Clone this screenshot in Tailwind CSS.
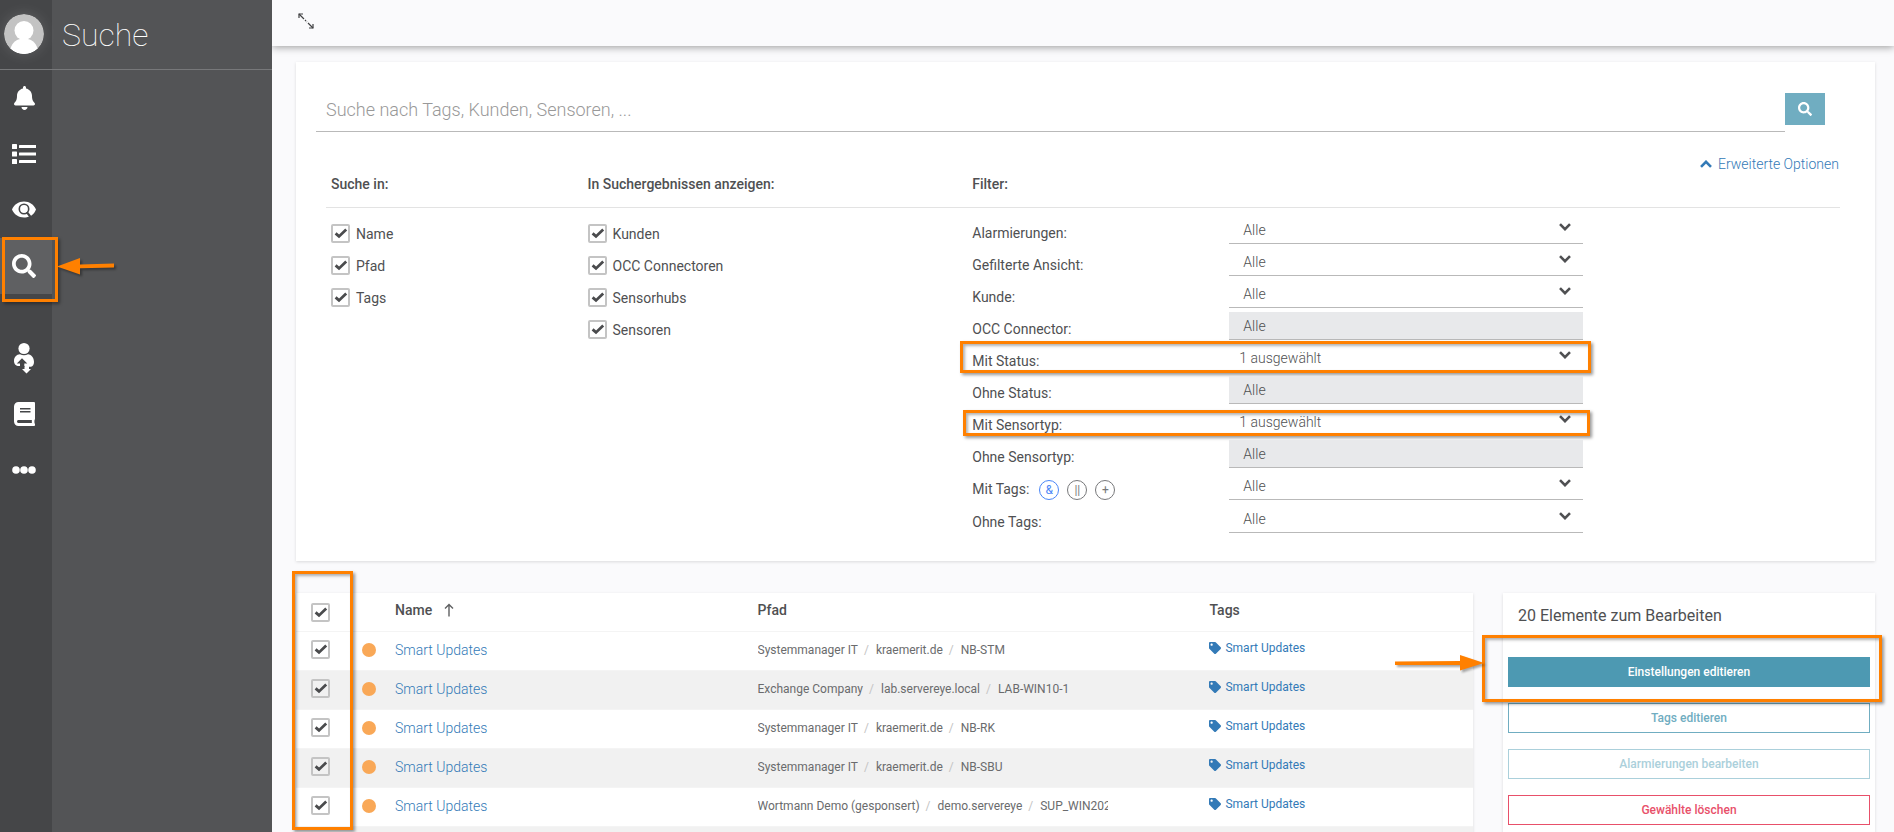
<!DOCTYPE html>
<html lang="de">
<head>
    <meta charset="UTF-8">
    <meta name="viewport" content="width=device-width, initial-scale=1.0">
    <title>Suche</title>
    <script src="https://cdn.jsdelivr.net/npm/@tailwindcss/browser@4"></script>
</head>
<body class="bg-[#fafafc] font-['Roboto','Open_Sans',sans-serif] text-sm text-[#4f5052] flex h-screen overflow-hidden">

    <!-- shared icons -->
    <svg class="hidden">
        <symbol id="i-check" viewBox="0 0 19 19"><path d="M4.600 9.400 8 12.400 15.200 5.600" fill="none" stroke="#4a4b4d" stroke-width="2.800"/></symbol>
        <symbol id="i-chevron" viewBox="0 0 12 8"><path d="M1 1.200 6 6.200 11 1.200" fill="none" stroke="currentColor" stroke-width="2.600"/></symbol>
        <symbol id="i-search" viewBox="0 0 512 512"><path fill="currentColor" d="M505 442.7L405.3 343c-4.5-4.5-10.6-7-17-7H372c27.6-35.3 44-79.7 44-128C416 93.1 322.9 0 208 0S0 93.1 0 208s93.1 208 208 208c48.3 0 92.7-16.4 128-44v16.3c0 6.4 2.5 12.5 7 17l99.7 99.7c9.4 9.4 24.6 9.4 33.9 0l28.3-28.3c9.4-9.4 9.4-24.6.1-34zM208 336c-70.7 0-128-57.2-128-128 0-70.7 57.2-128 128-128 70.7 0 128 57.2 128 128 0 70.7-57.2 128-128 128z"/></symbol>
        <symbol id="i-tag" viewBox="0 0 512 512"><path fill="currentColor" d="M0 252.1V48C0 21.5 21.5 0 48 0h204.1a48 48 0 0 1 33.9 14.1l211.9 211.9c18.7 18.7 18.7 49.1 0 67.9L293.8 497.9c-18.7 18.7-49.1 18.7-67.9 0L14.1 286.1A48 48 0 0 1 0 252.1zM112 64c-26.5 0-48 21.5-48 48s21.5 48 48 48 48-21.5 48-48-21.5-48-48-48z"/></symbol>
    </svg>

    <!-- sidebar -->
    <aside class="flex w-[272px] shrink-0 flex-col bg-[#535456] relative z-20">
        <header class="flex h-[70px] shrink-0 border-b border-[#77787a]">
            <div class="w-[52px] bg-[#454648] pl-1 pt-3.5">
                <svg class="size-10 rounded-full shadow-[0_0_14px_rgba(255,255,255,0.15)]" viewBox="0 0 40 40">
                    <circle cx="20" cy="20" r="20" fill="#c3c3c3"/>
                    <path d="M6.500 34.800C8 28.500 13 24.500 20 24.500s12 4 13.500 10.300A20 20 0 0 1 6.500 34.800z" fill="#fff"/>
                    <circle cx="20" cy="16.500" r="9.500" fill="#fff"/>
                </svg>
            </div>
            <h1 class="pl-2.5 pt-[15px] text-[32px] leading-10 font-thin text-white">Suche</h1>
        </header>
        <nav class="flex w-[52px] grow flex-col bg-[#454648] text-white
            [&>a]:flex
            [&>a]:h-14
            [&>a]:items-center
            [&>a]:justify-center
            [&>a]:pr-1
        ">
            <a href="#" aria-label="Alarmierungen">
                <svg class="h-6" viewBox="0 0 448 512" fill="currentColor"><path d="M224 512c35.320 0 63.970-28.650 63.970-64H160.030c0 35.350 28.650 64 63.970 64zm215.390-149.710c-19.320-20.760-55.470-51.990-55.470-154.290 0-77.700-54.480-139.900-127.940-155.160V32c0-17.670-14.320-32-31.980-32s-31.980 14.330-31.980 32v20.840C118.560 68.100 64.080 130.300 64.080 208c0 102.300-36.150 133.530-55.470 154.290-6 6.450-8.660 14.160-8.610 21.710.11 16.400 12.980 32 32.100 32h383.800c19.120 0 32-15.600 32.100-32 .05-7.550-2.610-15.270-8.610-21.710z"/></svg>
            </a>
            <a href="#" aria-label="Liste">
                <svg class="size-6" viewBox="0 0 24 24" fill="currentColor">
                    <rect x="0" y="2" width="5" height="5" rx=".6"/><rect x="7" y="3" width="17.500" height="3" rx=".6"/>
                    <rect x="0" y="9.500" width="5" height="5" rx=".6"/><rect x="7" y="10.500" width="17.500" height="3" rx=".6"/>
                    <rect x="0" y="17" width="5" height="5" rx=".6"/><rect x="7" y="18" width="17.500" height="3" rx=".6"/>
                </svg>
            </a>
            <a href="#" aria-label="Ansichten">
                <svg class="size-6" viewBox="0 0 24 24">
                    <path d="M12 3.500C6.500 3.500 2 6.700 0 11.500c2 4.800 6.500 8 12 8 2 0 4-.4 5.600-1.200L19.500 17.500C21.500 16 23 14 24 11.500 22 6.700 17.500 3.500 12 3.500z" fill="#fff"/>
                    <circle cx="12" cy="11" r="4.700" fill="#fff" stroke="#454648" stroke-width="1.600"/>
                    <path d="M14.800 14.100 18.200 18.500" stroke="#454648" stroke-width="2.200"/>
                </svg>
            </a>
            <a href="#" aria-label="Suche" aria-current="page" class="relative bg-[#5f6062]">
                <svg class="size-6"><use href="#i-search"/></svg>
                <span class="absolute -top-px left-0.5 h-[65px] w-14 border-3 border-[#ff8000] shadow-[2px_2px_3px_rgba(0,0,0,0.35)]"></span>
                <svg class="absolute top-4 left-14 h-7 w-16 drop-shadow-[2px_2px_1px_rgba(0,0,0,0.35)]" viewBox="0 0 64 28"><path d="M1 12.500 24 4v6.500l34-1v4l-34 .8V20.500z" fill="#ff8000"/></svg>
            </a>
            <a href="#" aria-label="Fernwartung" class="mt-9">
                <svg class="h-8 w-6" viewBox="0 0 24 32">
                    <circle cx="12" cy="6.500" r="5.600" fill="#fff"/>
                    <path d="M8 12.300c1.200.7 2.500 1 4 1s2.800-.3 4-1c3.500.2 6 3.600 6 7.700 0 2.500-1.200 4.300-3 4.800h-2V27h2l-4.500 4.500L10 27h2.500v-3H8c-3.500.5-6-1.500-6-5 0-4 2.500-6.500 6-6.700z" fill="#fff"/>
                    <path d="M10 16.200 4.800 21.500H8V25h4.300v-3.500h3z" fill="#454648"/>
                </svg>
            </a>
            <a href="#" aria-label="Handbuch">
                <svg class="h-6" viewBox="0 0 448 512" fill="currentColor"><path d="M448 360V24c0-13.300-10.700-24-24-24H96C43 0 0 43 0 96v320c0 53 43 96 96 96h328c13.300 0 24-10.700 24-24v-16c0-7.500-3.500-14.300-8.900-18.700-4.200-15.400-4.200-59.300 0-74.700 5.400-4.300 8.900-11.100 8.900-18.600zM128 134c0-3.300 2.700-6 6-6h212c3.300 0 6 2.700 6 6v20c0 3.300-2.700 6-6 6H134c-3.300 0-6-2.700-6-6v-20zm0 64c0-3.300 2.700-6 6-6h212c3.300 0 6 2.700 6 6v20c0 3.300-2.700 6-6 6H134c-3.300 0-6-2.700-6-6v-20zm253.400 250H96c-17.700 0-32-14.300-32-32 0-17.600 14.400-32 32-32h285.400c-1.900 17.100-1.900 46.900 0 64z"/></svg>
            </a>
            <a href="#" aria-label="Mehr">
                <svg class="size-6" viewBox="0 0 24 24" fill="currentColor"><circle cx="4" cy="12" r="3.800"/><circle cx="12" cy="12" r="3.800"/><circle cx="20" cy="12" r="3.800"/></svg>
            </a>
        </nav>
    </aside>

    <div class="flex min-w-0 grow flex-col">
        <!-- top bar -->
        <header class="relative z-10 flex h-[46px] shrink-0 items-center bg-[#fafafc] pb-1 pl-[26px] shadow-[0_1px_8px_rgba(0,0,0,0.4)]">
            <button type="button" aria-label="Vollbild">
                <svg class="size-4" viewBox="0 0 16 16" fill="none" stroke="#3f4042" stroke-width="1.200">
                    <path d="M1 5V1h4M15 11v4h-4"/><path d="M1 1 6 6M10 10l5 5"/><path d="M7 7l2 2" stroke-dasharray="1.500 1"/>
                </svg>
            </button>
        </header>

        <main class="flex flex-col gap-8 pt-4 pr-[19px] pl-6">
            <!-- search form -->
            <form class="bg-white px-5 pb-7 shadow-[0_1px_3px_rgba(0,0,0,0.13)]">
                <div class="flex items-start pt-[31px] pr-[30px]">
                    <input type="text" aria-label="Suche" placeholder="Suche nach Tags, Kunden, Sensoren, ..." class="h-[39px] min-w-0 grow border-b border-[#b9b9b9] px-2.5 pb-1.5 text-lg font-light placeholder:text-[#999] outline-none">
                    <button type="submit" aria-label="Suchen" class="grid h-8 w-10 place-items-center bg-[#70adc1] text-white"><svg class="size-3.5"><use href="#i-search"/></svg></button>
                </div>
                <div class="flex justify-end pt-[22px] pr-4">
                    <a href="#" class="flex items-center gap-1.5 leading-5 font-light text-[#337ab7]">
                        <svg class="h-2 w-3 rotate-180"><use href="#i-chevron"/></svg>Erweiterte Optionen
                    </a>
                </div>
                <div class="mr-[15px] ml-2.5 h-[34px] border-b border-[#e3e3e3]"></div>

                <div class="-mt-[34px] grid grid-cols-[2fr_3fr_7fr]
                    [&>section]:px-[15px]
                    [&_h2]:h-[50px]
                    [&_h2]:leading-5
                    [&_h2]:font-medium
                    [&_.tick]:grid
                    [&_.tick]:size-[19px]
                    [&_.tick>*]:col-start-1
                    [&_.tick>*]:row-start-1
                    [&_.tick>*]:size-[19px]
                    [&_.option]:flex
                    [&_.option]:h-8
                    [&_.option]:items-start
                    [&_.option]:gap-1.5
                    [&_.option]:leading-5
                ">
                    <section>
                        <h2>Suche in:</h2>
                        <label class="option"><span class="tick"><input type="checkbox" checked class="appearance-none rounded-xs border-2 border-[#c4c4c4] bg-white"><svg class="pointer-events-none"><use href="#i-check"/></svg></span>Name</label>
                        <label class="option"><span class="tick"><input type="checkbox" checked class="appearance-none rounded-xs border-2 border-[#c4c4c4] bg-white"><svg class="pointer-events-none"><use href="#i-check"/></svg></span>Pfad</label>
                        <label class="option"><span class="tick"><input type="checkbox" checked class="appearance-none rounded-xs border-2 border-[#c4c4c4] bg-white"><svg class="pointer-events-none"><use href="#i-check"/></svg></span>Tags</label>
                    </section>
                    <section>
                        <h2>In Suchergebnissen anzeigen:</h2>
                        <label class="option"><span class="tick"><input type="checkbox" checked class="appearance-none rounded-xs border-2 border-[#c4c4c4] bg-white"><svg class="pointer-events-none"><use href="#i-check"/></svg></span>Kunden</label>
                        <label class="option"><span class="tick"><input type="checkbox" checked class="appearance-none rounded-xs border-2 border-[#c4c4c4] bg-white"><svg class="pointer-events-none"><use href="#i-check"/></svg></span>OCC Connectoren</label>
                        <label class="option"><span class="tick"><input type="checkbox" checked class="appearance-none rounded-xs border-2 border-[#c4c4c4] bg-white"><svg class="pointer-events-none"><use href="#i-check"/></svg></span>Sensorhubs</label>
                        <label class="option"><span class="tick"><input type="checkbox" checked class="appearance-none rounded-xs border-2 border-[#c4c4c4] bg-white"><svg class="pointer-events-none"><use href="#i-check"/></svg></span>Sensoren</label>
                    </section>
                    <section>
                        <h2>Filter:</h2>
                        <div class="-mt-2 flex flex-col gap-1
                            [&>.filter]:relative
                            [&>.filter]:grid
                            [&>.filter]:h-7
                            [&>.filter]:grid-cols-[8fr_11fr_8fr]
                            [&_label]:pt-[7px]
                            [&_label]:leading-5
                            [&_.box]:relative
                            [&_select]:h-7
                            [&_select]:w-full
                            [&_select]:appearance-none
                            [&_select]:border-b
                            [&_select]:border-[#b9b9b9]
                            [&_select]:pl-3.5
                            [&_select]:font-light
                            [&_select]:opacity-100
                            [&_select:disabled]:bg-[#e8e9eb]
                            [&_.box>svg]:absolute
                            [&_.box>svg]:top-[7px]
                            [&_.box>svg]:right-3
                            [&_.box>svg]:h-2
                            [&_.box>svg]:w-3
                            [&_.box>svg]:pointer-events-none
                            [&_.mark]:absolute
                            [&_.mark]:border-3
                            [&_.mark]:border-[#ff8000]
                            [&_.mark]:pointer-events-none
                        ">
                            <div class="filter"><label for="f1">Alarmierungen:</label><div class="box"><select id="f1"><option>Alle</option></select><svg><use href="#i-chevron"/></svg></div></div>
                            <div class="filter"><label for="f2">Gefilterte Ansicht:</label><div class="box"><select id="f2"><option>Alle</option></select><svg><use href="#i-chevron"/></svg></div></div>
                            <div class="filter"><label for="f3">Kunde:</label><div class="box"><select id="f3"><option>Alle</option></select><svg><use href="#i-chevron"/></svg></div></div>
                            <div class="filter"><label for="f4">OCC Connector:</label><div class="box"><select id="f4" disabled><option>Alle</option></select></div></div>
                            <div class="filter">
                                <label for="f5">Mit Status:</label><div class="box"><select id="f5" class="pl-2.5!"><option>1 ausgewählt</option></select><svg><use href="#i-chevron"/></svg></div>
                                <div class="mark -top-[3px] -left-3 h-8 w-[631px] shadow-[2px_2px_3px_rgba(0,0,0,0.4),inset_2px_2px_3px_rgba(0,0,0,0.3)]"></div>
                            </div>
                            <div class="filter"><label for="f6">Ohne Status:</label><div class="box"><select id="f6" disabled><option>Alle</option></select></div></div>
                            <div class="filter">
                                <label for="f7">Mit Sensortyp:</label><div class="box"><select id="f7" class="pl-2.5!"><option>1 ausgewählt</option></select><svg><use href="#i-chevron"/></svg></div>
                                <div class="mark top-0.5 -left-[9px] h-[26px] w-[627px] shadow-[2px_2px_3px_rgba(0,0,0,0.4),inset_2px_2px_3px_rgba(0,0,0,0.3)]"></div>
                            </div>
                            <div class="filter"><label for="f8">Ohne Sensortyp:</label><div class="box"><select id="f8" disabled><option>Alle</option></select></div></div>
                            <div class="filter">
                                <div class="flex items-start gap-2
                                    [&>label]:pr-0.5
                                    [&>button]:mt-2
                                    [&>button]:size-5
                                    [&>button]:rounded-full
                                    [&>button]:border
                                    [&>button]:border-current
                                    [&>button]:text-xs
                                    [&>button]:leading-[18px]
                                    [&>button]:text-[#77787a]
                                    [&>button.active]:text-[#4a86f7]
                                ">
                                    <label for="f9">Mit Tags:</label>
                                    <button type="button" class="active">&amp;</button>
                                    <button type="button">||</button>
                                    <button type="button">+</button>
                                </div>
                                <div class="box"><select id="f9"><option>Alle</option></select><svg><use href="#i-chevron"/></svg></div>
                            </div>
                            <div class="filter mt-px"><label for="f10">Ohne Tags:</label><div class="box"><select id="f10"><option>Alle</option></select><svg><use href="#i-chevron"/></svg></div></div>
                        </div>
                    </section>
                </div>
            </form>

            <div class="flex items-start gap-[30px]">
                <!-- results -->
                <div class="relative min-w-0 grow bg-white shadow-[0_1px_3px_rgba(0,0,0,0.13)]">
                    <table class="w-full table-fixed text-left
                        [&_th]:h-[38px]
                        [&_th]:pb-3
                        [&_th]:pt-2
                        [&_th]:leading-[18px]
                        [&_th]:font-medium
                        [&_th:first-child]:pb-2
                        [&_td]:h-[39px]
                        [&_td]:border-t
                        [&_td]:border-[#f4f4f4]
                        [&_td]:pb-[3px]
                        [&_tbody>tr:nth-child(even)]:bg-[#f1f1f1]
                        [&_tr>*:first-child]:pl-[15px]
                        [&_input]:block
                        [&_.tick]:grid
                        [&_.tick>*]:col-start-1
                        [&_.tick>*]:row-start-1
                        [&_.tick>*]:size-[19px]
                        [&_.dot]:block
                        [&_.dot]:size-3.5
                        [&_.dot]:rounded-full
                        [&_.dot]:bg-[#f9a857]
                        [&_.name]:leading-5
                        [&_.name]:font-light
                        [&_.name]:text-[#337ab7]
                        [&_.tag]:flex
                        [&_.tag]:items-center
                        [&_.tag]:gap-1
                        [&_.tag]:pb-[3px]
                        [&_.tag]:text-xs
                        [&_.tag]:leading-4
                        [&_.tag]:text-[#337ab7]
                        [&_ol]:flex
                        [&_ol]:w-[350px]
                        [&_ol]:overflow-hidden
                        [&_ol]:whitespace-nowrap
                        [&_ol]:text-xs
                        [&_ol]:leading-4
                        [&_ol]:text-[#6a6b6d]
                        [&_li+li]:before:content-['/']
                        [&_li+li]:before:pr-[7px]
                        [&_li+li]:before:pl-1.5
                        [&_li+li]:before:text-[#c4c4c4]
                    ">
                        <colgroup><col class="w-[66px]"><col class="w-[33px]"><col class="w-[30.8%]"><col class="w-[38.4%]"><col></colgroup>
                        <thead>
                            <tr>
                                <th><label class="tick"><input type="checkbox" checked aria-label="Alle auswählen" class="appearance-none rounded-xs border-2 border-[#c4c4c4] bg-white"><svg class="pointer-events-none"><use href="#i-check"/></svg></label></th>
                                <th></th>
                                <th><span class="flex items-center gap-3">Name <svg class="h-3.5 w-2.5" viewBox="0 0 10 14" fill="none" stroke="#5f6062" stroke-width="1.400"><path d="M5 13.500V2M1 5.500 5 1.500 9 5.500"/></svg></span></th>
                                <th>Pfad</th>
                                <th>Tags</th>
                            </tr>
                        </thead>
                        <tbody>
                            <tr>
                                <td><label class="tick"><input type="checkbox" checked aria-label="Auswählen" class="appearance-none rounded-xs border-2 border-[#c4c4c4] bg-white"><svg class="pointer-events-none"><use href="#i-check"/></svg></label></td>
                                <td><span class="dot"></span></td>
                                <td><a href="#" class="name">Smart Updates</a></td>
                                <td><ol><li>Systemmanager IT</li><li>kraemerit.de</li><li>NB-STM</li></ol></td>
                                <td><a href="#" class="tag"><svg class="size-3"><use href="#i-tag"/></svg>Smart Updates</a></td>
                            </tr>
                            <tr>
                                <td><label class="tick"><input type="checkbox" checked aria-label="Auswählen" class="appearance-none rounded-xs border-2 border-[#c4c4c4]"><svg class="pointer-events-none"><use href="#i-check"/></svg></label></td>
                                <td><span class="dot"></span></td>
                                <td><a href="#" class="name">Smart Updates</a></td>
                                <td><ol><li>Exchange Company</li><li>lab.servereye.local</li><li>LAB-WIN10-1</li></ol></td>
                                <td><a href="#" class="tag"><svg class="size-3"><use href="#i-tag"/></svg>Smart Updates</a></td>
                            </tr>
                            <tr>
                                <td><label class="tick"><input type="checkbox" checked aria-label="Auswählen" class="appearance-none rounded-xs border-2 border-[#c4c4c4] bg-white"><svg class="pointer-events-none"><use href="#i-check"/></svg></label></td>
                                <td><span class="dot"></span></td>
                                <td><a href="#" class="name">Smart Updates</a></td>
                                <td><ol><li>Systemmanager IT</li><li>kraemerit.de</li><li>NB-RK</li></ol></td>
                                <td><a href="#" class="tag"><svg class="size-3"><use href="#i-tag"/></svg>Smart Updates</a></td>
                            </tr>
                            <tr>
                                <td><label class="tick"><input type="checkbox" checked aria-label="Auswählen" class="appearance-none rounded-xs border-2 border-[#c4c4c4]"><svg class="pointer-events-none"><use href="#i-check"/></svg></label></td>
                                <td><span class="dot"></span></td>
                                <td><a href="#" class="name">Smart Updates</a></td>
                                <td><ol><li>Systemmanager IT</li><li>kraemerit.de</li><li>NB-SBU</li></ol></td>
                                <td><a href="#" class="tag"><svg class="size-3"><use href="#i-tag"/></svg>Smart Updates</a></td>
                            </tr>
                            <tr>
                                <td><label class="tick"><input type="checkbox" checked aria-label="Auswählen" class="appearance-none rounded-xs border-2 border-[#c4c4c4] bg-white"><svg class="pointer-events-none"><use href="#i-check"/></svg></label></td>
                                <td><span class="dot"></span></td>
                                <td><a href="#" class="name">Smart Updates</a></td>
                                <td><ol><li>Wortmann Demo (gesponsert)</li><li>demo.servereye</li><li>SUP_WIN202</li></ol></td>
                                <td><a href="#" class="tag"><svg class="size-3"><use href="#i-tag"/></svg>Smart Updates</a></td>
                            </tr>
                            <tr><td></td><td></td><td></td><td></td><td></td></tr>
                        </tbody>
                    </table>
                    <div class="pointer-events-none absolute -top-[22px] -left-1 h-[259px] w-[61px] border-3 border-[#ff8000] shadow-[2px_2px_3px_rgba(0,0,0,0.4),inset_2px_2px_3px_rgba(0,0,0,0.3)]"></div>
                </div>

                <!-- bulk actions -->
                <aside class="relative flex w-[372px] shrink-0 flex-col gap-4 bg-white px-[5px] pb-4 shadow-[0_1px_3px_rgba(0,0,0,0.13)]
                    [&>button]:h-[30px]
                    [&>button]:border
                    [&>button]:text-xs
                    [&>button]:font-medium
                ">
                    <h2 class="px-2.5 pt-[11px] pb-[13px] text-base leading-6">20 Elemente zum Bearbeiten</h2>
                    <button type="button" class="border-[#4d99b2] bg-[#4d99b2] text-white">Einstellungen editieren</button>
                    <button type="button" class="border-[#70adc1] text-[#70adc1]">Tags editieren</button>
                    <button type="button" disabled class="border-[#abd0db] text-[#abd0db]">Alarmierungen bearbeiten</button>
                    <button type="button" class="border-[#e8506a] text-[#e8506a]">Gewählte löschen</button>
                    <div class="pointer-events-none absolute top-[42px] -right-[7px] -left-[21px] h-[67px] border-3 border-[#ff8000] shadow-[2px_2px_3px_rgba(0,0,0,0.4),inset_2px_2px_3px_rgba(0,0,0,0.3)]"></div>
                    <svg class="pointer-events-none absolute top-14 -left-[108px] h-7 w-[90px] drop-shadow-[2px_2px_1px_rgba(0,0,0,0.35)]" viewBox="0 0 90 28"><path d="M0 12.500 65 12V6l24 8-24 7.500V16H0z" fill="#ff8000"/></svg>
                </aside>
            </div>
        </main>
    </div>
</body>
</html>
